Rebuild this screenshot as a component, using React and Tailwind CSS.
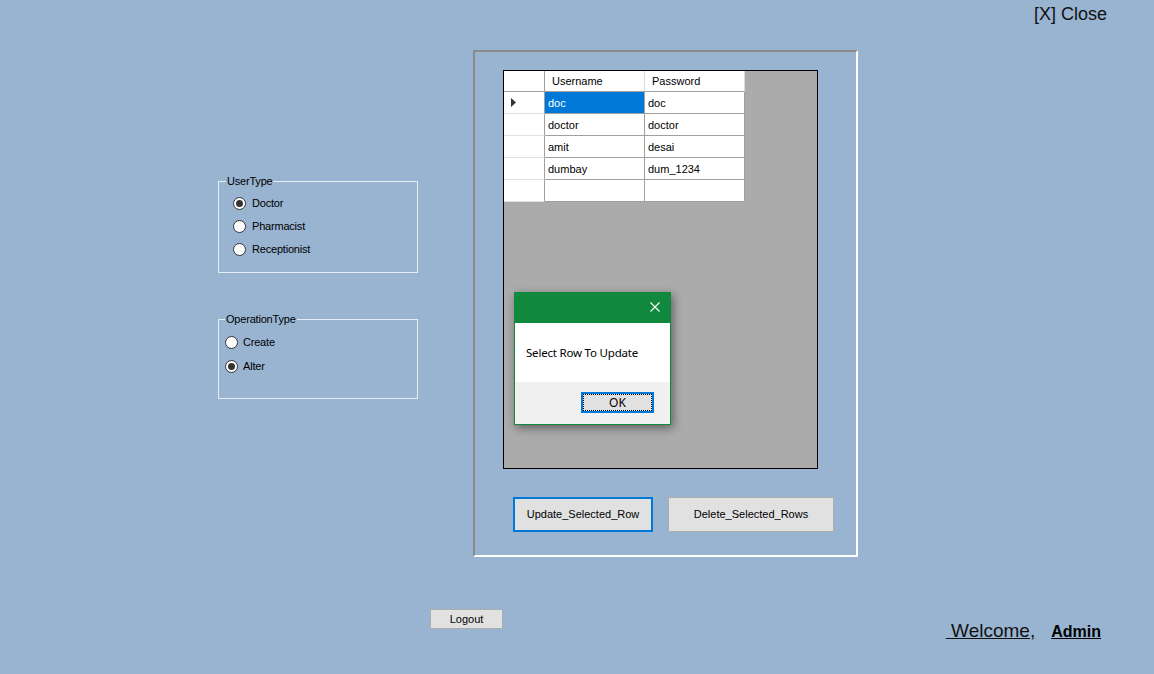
import React from "react";

const rows = [
  ["doc", "doc"],
  ["doctor", "doctor"],
  ["amit", "desai"],
  ["dumbay", "dum_1234"],
  ["", ""],
];

function Radio({ checked, label, gap }) {
  return (
    <div className="flex items-center">
      <span className="relative w-[13px] h-[13px] rounded-full border border-[#333] bg-white flex items-center justify-center">
        {checked && <span className="w-[7px] h-[7px] rounded-full bg-[#333]" />}
      </span>
      <span className={`${gap} text-[11px] leading-[13px] text-black tracking-[-0.2px]`}>{label}</span>
    </div>
  );
}

export default function App() {
  return (
    <div
      className="w-[1154px] h-[674px] bg-[#99b4d1] flex flex-col overflow-hidden text-black"
      style={{ fontFamily: '"Liberation Sans", Arial, sans-serif' }}
    >
      {/* Header */}
      <div className="h-[50px] flex justify-end pr-[47px] pt-[4px]">
        <span className="text-[18px] leading-[20px] text-[#111]">[X] Close</span>
      </div>

      {/* Main row */}
      <div className="flex items-start">
        {/* Left column */}
        <div className="ml-[218px] mt-[125px] w-[200px] flex flex-col">
          <fieldset className="h-[98px] border border-[#e8edf3] m-0 p-0">
            <legend className="ml-[7px] px-[1px] text-[11px] leading-[13px] tracking-[-0.2px]">UserType</legend>
            <div className="flex flex-col pt-[4px] pl-[14px]">
              <div className="h-[23px] flex items-center">
                <Radio checked label="Doctor" gap="ml-[6px]" />
              </div>
              <div className="h-[23px] flex items-center">
                <Radio label="Pharmacist" gap="ml-[6px]" />
              </div>
              <div className="h-[23px] flex items-center">
                <Radio label="Receptionist" gap="ml-[6px]" />
              </div>
            </div>
          </fieldset>

          <fieldset className="mt-[40px] h-[86px] border border-[#e8edf3] m-0 p-0">
            <legend className="ml-[6px] px-[1px] text-[11px] leading-[13px] tracking-[-0.2px]">OperationType</legend>
            <div className="flex flex-col pt-[4px] pl-[6px]">
              <div className="h-[24px] flex items-center">
                <Radio label="Create" gap="ml-[5px]" />
              </div>
              <div className="h-[24px] flex items-center">
                <Radio checked label="Alter" gap="ml-[5px]" />
              </div>
            </div>
          </fieldset>
        </div>

        {/* Panel */}
        <div className="ml-[55px] w-[385px] h-[507px] border-2 border-t-[#8a8a8a] border-l-[#8a8a8a] border-r-white border-b-white pl-[28px] pt-[18px] flex flex-col">
          <div className="relative w-[315px] h-[399px] border border-black bg-[#ababab]">
            <div className="grid grid-cols-[41px_100px_100px] w-fit">
              {/* header row */}
              <div className="h-[21px] bg-white border-r border-b border-r-[#a0a0a0] border-b-[#a0a0a0]" />
              <div className="h-[21px] bg-white border-r border-b border-r-[#dcdcdc] border-b-[#a0a0a0] flex items-center pl-[7px] pt-[1px] text-[11px]">
                Username
              </div>
              <div className="h-[21px] bg-white border-r border-b border-r-[#dcdcdc] border-b-[#a0a0a0] flex items-center pl-[7px] pt-[1px] text-[11px]">
                Password
              </div>
              {rows.map((r, i) => (
                <React.Fragment key={i}>
                  <div className="h-[22px] bg-white border-r border-b border-r-[#a0a0a0] border-b-[#e0e0e0] flex items-center pl-[7px]">
                    {i === 0 && (
                      <svg width="5" height="9" viewBox="0 0 5 9">
                        <path d="M0 0 L5 4.5 L0 9 Z" fill="#333" />
                      </svg>
                    )}
                  </div>
                  <div
                    className={`h-[22px] border-r border-b border-[#a0a0a0] flex items-center pl-[3px] pt-[2px] text-[11px] ${
                      i === 0 ? "bg-[#0078d7] text-white" : "bg-white"
                    }`}
                  >
                    {r[0]}
                  </div>
                  <div className="h-[22px] bg-white border-r border-b border-[#a0a0a0] flex items-center pl-[3px] pt-[2px] text-[11px]">
                    {r[1]}
                  </div>
                </React.Fragment>
              ))}
            </div>

            {/* Message box */}
            <div
              className="absolute left-[10px] top-[221px] w-[157px] h-[133px] border border-[#10893e] bg-[#f0f0f0] flex flex-col shadow-[2px_3px_9px_rgba(0,0,0,0.45)]"
              style={{ fontFamily: '"Noto Sans", "Open Sans", sans-serif' }}
            >
              <div className="h-[30px] bg-[#10893e] flex justify-end items-start pt-[9px] pr-[10px]">
                <svg width="10" height="10" viewBox="0 0 10 10">
                  <path d="M0.5 0.5 L9.5 9.5 M9.5 0.5 L0.5 9.5" stroke="white" strokeWidth="1.1" fill="none" />
                </svg>
              </div>
              <div className="h-[59px] bg-white flex items-center pl-[11px] text-[11.5px] tracking-[-0.2px] text-black">
                Select Row To Update
              </div>
              <div className="flex justify-end pr-[16px] pt-[10px]">
                <div className="w-[73px] h-[21px] border-2 border-[#0078d7] bg-[#e1e1e1] flex">
                  <div className="flex-1 border border-dotted border-black flex items-center justify-center text-[12px] leading-[14px]">
                    OK
                  </div>
                </div>
              </div>
            </div>
          </div>

          <div className="mt-[28px] ml-[10px] flex gap-[15px]">
            <div className="w-[140px] h-[35px] border-2 border-[#0078d7] bg-[#e1e1e1] flex items-center justify-center text-[11px]">
              Update_Selected_Row
            </div>
            <div className="w-[166px] h-[35px] border border-[#adadad] bg-[#e1e1e1] flex items-center justify-center text-[11px]">
              Delete_Selected_Rows
            </div>
          </div>
        </div>
      </div>

      {/* Bottom row */}
      <div className="mt-[52px] flex items-start">
        <div className="ml-[430px] w-[73px] h-[20px] border border-[#adadad] bg-[#e1e1e1] flex items-center justify-center pt-[1px] text-[11px]">
          Logout
        </div>
        <div className="ml-auto mr-[53px] mt-[11px] flex items-baseline">
          <span className="text-[19px] leading-[22px] underline text-[#111]">{"\u00a0Welcome,"}</span>
          <span className="ml-[16px] text-[16px] leading-[22px] font-bold underline">Admin</span>
        </div>
      </div>
    </div>
  );
}
